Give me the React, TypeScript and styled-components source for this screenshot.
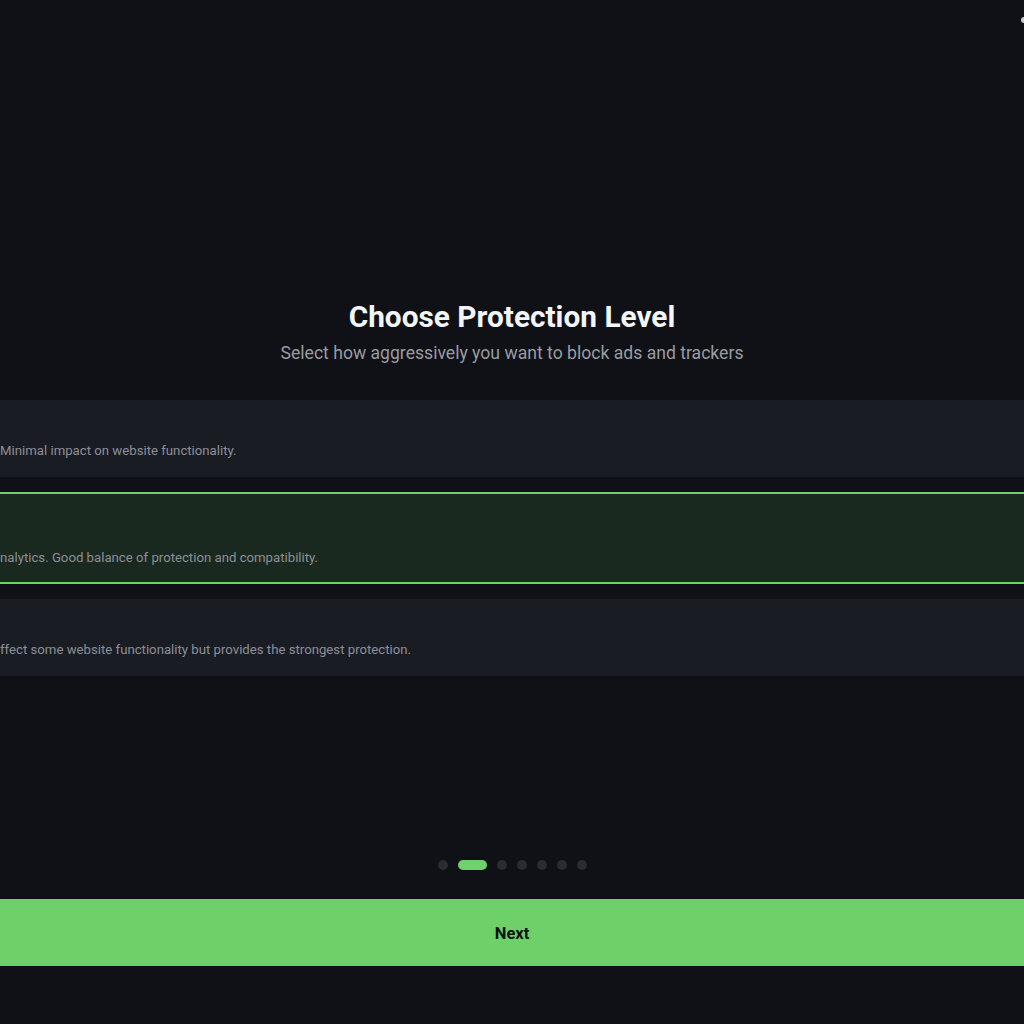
import React from 'react';
import styled, { createGlobalStyle } from 'styled-components';

const GlobalStyle = createGlobalStyle`
  html, body {
    margin: 0;
    padding: 0;
    background: #0f1116;
    overflow: hidden;
  }
  * { box-sizing: border-box; }
`;

const Page = styled.div`
  width: 100vw;
  height: 100vh;
  background: #0f1116;
  font-family: Roboto, "Noto Sans", sans-serif;
  display: flex;
  flex-direction: column;
  overflow: hidden;
`;

const TopBar = styled.div`
  height: 40px;
  display: flex;
  justify-content: flex-end;
  align-items: center;
`;

const Corner = styled.span`
  width: 8px;
  height: 6px;
  margin-right: -5px;
  border-radius: 3px;
  background: #c9cbd0;
`;

const Heading = styled.div`
  margin-top: 258px;
  display: flex;
  flex-direction: column;
  align-items: center;
`;

const Title = styled.h1`
  margin: 0;
  font-size: 29.8px;
  line-height: 38px;
  font-weight: 700;
  color: #f4f5f7;
`;

const Subtitle = styled.p`
  margin: 0;
  font-size: 17.6px;
  line-height: 34px;
  color: #9a9ca3;
`;

const CardList = styled.div`
  margin: 30px -24px 0;
  display: flex;
  flex-direction: column;
  gap: 15px;
`;

const Card = styled.div<{ $selected?: boolean }>`
  padding: 14px 24px ${p => (p.$selected ? '11px' : '13px')};
  height: ${p => (p.$selected ? '92px' : '77px')};
  display: flex;
  flex-direction: column;
  justify-content: flex-end;
  background: ${p => (p.$selected ? '#1a291f' : '#1a1c24')};
  border-top: ${p => (p.$selected ? '2px solid #6fcf6a' : 'none')};
  border-bottom: ${p => (p.$selected ? '2px solid #6fcf6a' : 'none')};
`;

const Desc = styled.div`
  font-size: 13.2px;
  line-height: 18px;
  color: #8c8f97;
  padding-bottom: 4px;
  white-space: nowrap;
`;

const Spacer = styled.div`
  flex: 1;
`;

const Dots = styled.div`
  display: flex;
  justify-content: center;
  align-items: center;
  gap: 10px;
  margin-bottom: 29px;
`;

const Dot = styled.span<{ $active?: boolean }>`
  width: ${p => (p.$active ? '29px' : '10px')};
  height: 10px;
  border-radius: 5px;
  background: ${p => (p.$active ? '#6fd16a' : '#2a2c32')};
`;

const NextButton = styled.button`
  margin: 0 -20px 58px;
  height: 67px;
  border: none;
  padding: 2px 0 0;
  background: #6dd068;
  color: #0e1210;
  font-family: Roboto, "Noto Sans", sans-serif;
  font-size: 16.5px;
  font-weight: 700;
  cursor: pointer;
`;

const levels = [
  { desc: 'Minimal impact on website functionality.' },
  { desc: 'nalytics. Good balance of protection and compatibility.', selected: true },
  { desc: 'ffect some website functionality but provides the strongest protection.' },
];

export default function App() {
  return (
    <>
      <GlobalStyle />
      <Page>
        <TopBar>
          <Corner />
        </TopBar>
        <Heading>
          <Title>Choose Protection Level</Title>
          <Subtitle>Select how aggressively you want to block ads and trackers</Subtitle>
        </Heading>
        <CardList>
          {levels.map((l, i) => (
            <Card key={i} $selected={l.selected}>
              <Desc>{l.desc}</Desc>
            </Card>
          ))}
        </CardList>
        <Spacer />
        <Dots>
          {[0, 1, 2, 3, 4, 5, 6].map(i => (
            <Dot key={i} $active={i === 1} />
          ))}
        </Dots>
        <NextButton>Next</NextButton>
      </Page>
    </>
  );
}
